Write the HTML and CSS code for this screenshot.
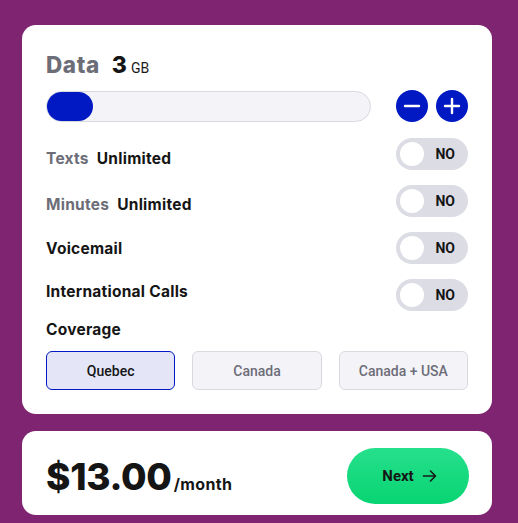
FILE: index.html
```html
<!DOCTYPE html>
<html>
<head>
<meta charset="utf-8">
<link rel="stylesheet" href="styles.css">
</head>
<body>
<div class="page">
  <section class="card plan">
    <div class="data-head">
      <span class="data-title">Data</span>
      <span class="data-val">3</span>
      <span class="data-unit">GB</span>
    </div>
    <div class="slider-row">
      <div class="track"><div class="thumb"></div></div>
      <div class="steppers">
        <button class="step" aria-label="minus"><svg width="32" height="32" viewBox="0 0 32 32"><line x1="9" y1="16" x2="23" y2="16" stroke="#fff" stroke-width="2.4" stroke-linecap="round"/></svg></button>
        <button class="step" aria-label="plus"><svg width="32" height="32" viewBox="0 0 32 32"><line x1="9" y1="16" x2="23" y2="16" stroke="#fff" stroke-width="2.4" stroke-linecap="round"/><line x1="16" y1="9" x2="16" y2="23" stroke="#fff" stroke-width="2.4" stroke-linecap="round"/></svg></button>
      </div>
    </div>
    <div class="opt-row">
      <div class="label low"><span class="muted">Texts</span><span class="strong">Unlimited</span></div>
      <div class="toggle"><span class="knob"></span><span class="no">NO</span></div>
    </div>
    <div class="opt-row">
      <div class="label lowish"><span class="muted">Minutes</span><span class="strong">Unlimited</span></div>
      <div class="toggle"><span class="knob"></span><span class="no">NO</span></div>
    </div>
    <div class="opt-row">
      <div class="label"><span class="strong">Voicemail</span></div>
      <div class="toggle"><span class="knob"></span><span class="no">NO</span></div>
    </div>
    <div class="opt-row">
      <div class="label high"><span class="strong">International Calls</span></div>
      <div class="toggle"><span class="knob"></span><span class="no">NO</span></div>
    </div>
    <div class="coverage-title">Coverage</div>
    <div class="coverage">
      <button class="cov active">Quebec</button>
      <button class="cov">Canada</button>
      <button class="cov">Canada + USA</button>
    </div>
  </section>
  <section class="card total">
    <div class="price"><span class="amount">$13.00</span><span class="per">/month</span></div>
    <button class="next">Next <svg width="16" height="16" viewBox="0 0 16 16"><path d="M1.5 8h12M8.5 3 13.5 8l-5 5" fill="none" stroke="#1a1a1a" stroke-width="1.6" stroke-linecap="round" stroke-linejoin="round"/></svg></button>
  </section>
</div>
</body>
</html>
```
FILE: styles.css
```css
* { box-sizing: border-box; }
html, body { margin: 0; padding: 0; }
body {
  background: #7e2470;
  font-family: "Inter", "Lato", sans-serif;
  color: #1a1a1a;
  width: 518px;
  height: 523px;
  overflow: hidden;
}
.page {
  padding: 25px 26px 0 22px;
  display: flex;
  flex-direction: column;
  gap: 17px;
}
.card {
  background: #fff;
  border-radius: 14px;
}
.plan {
  padding: 25px 24px 24px 24px;
  display: flex;
  flex-direction: column;
}
.data-head {
  display: flex;
  align-items: baseline;
  height: 30px;
  line-height: 30px;
  overflow: hidden;
}
.data-title {
  font-size: 22.5px;
  font-weight: 800;
  color: #6d6d78;
  margin-right: 12px;
  letter-spacing: 0.6px;
}
.data-val {
  font-size: 23px;
  font-weight: 800;
  color: #151515;
  margin-right: 4px;
}
.data-unit {
  font-family: "Roboto", sans-serif;
  font-size: 14px;
  color: #1a1a1a;
}
.slider-row {
  margin-top: 10px;
  display: flex;
  align-items: center;
  height: 32px;
}
.track {
  width: 325px;
  height: 31px;
  border: 1px solid #d9d9e0;
  background: #f4f4f8;
  border-radius: 16px;
  display: flex;
  align-items: center;
}
.thumb {
  width: 46px;
  height: 29px;
  border-radius: 15px;
  background: #0019c2;
}
.steppers {
  margin-left: auto;
  display: flex;
  gap: 8px;
}
.step {
  width: 32px;
  height: 32px;
  padding: 0;
  border: none;
  border-radius: 50%;
  background: #0019c2;
  display: flex;
}
.opt-row {
  display: flex;
  align-items: center;
  justify-content: space-between;
  height: 32px;
  margin-top: 15px;
}
.slider-row + .opt-row { margin-top: 16px; }
.label {
  display: flex;
  gap: 8px;
  font-size: 15.5px;
  font-weight: 700;
  letter-spacing: 0.25px;
}
.label.low { padding-top: 8px; }
.label.lowish { padding-top: 6px; }
.label.high { padding-bottom: 8px; }
.muted { color: #6d6d78; }
.strong { color: #151515; }
.toggle {
  width: 72px;
  height: 32px;
  border-radius: 16px;
  background: #dcdce5;
  display: flex;
  align-items: center;
  padding: 0 13px 0 4px;
}
.knob {
  width: 24px;
  height: 24px;
  border-radius: 50%;
  background: #fff;
}
.no {
  margin-left: auto;
  font-family: "Roboto", sans-serif;
  font-weight: 700;
  font-size: 14px;
  color: #151515;
}
.coverage-title {
  margin-top: 8px;
  font-size: 15.5px;
  font-weight: 700;
  letter-spacing: 0.25px;
  color: #151515;
  height: 22px;
  line-height: 22px;
}
.coverage {
  margin-top: 10px;
  display: grid;
  grid-template-columns: repeat(3, 1fr);
  gap: 17px;
}
.cov {
  height: 39px;
  border-radius: 6px;
  border: 1px solid #d9d9e0;
  background: #f4f4f8;
  font-family: "Roboto", sans-serif;
  font-size: 14px;
  font-weight: 500;
  color: #6d6d78;
  padding: 0;
}
.cov.active {
  background: #e4e6f8;
  border-color: #0019c2;
  color: #151515;
}
.total {
  padding: 17px 23px 11px 24px;
  display: flex;
  align-items: center;
  justify-content: space-between;
}
.price { display: flex; align-items: baseline; }
.amount {
  font-size: 37px;
  font-weight: 800;
  color: #151515;
  letter-spacing: -0.3px;
}
.per {
  font-size: 16px;
  font-weight: 700;
  color: #151515;
  margin-left: 2px;
  letter-spacing: 0.4px;
}
.next {
  width: 122px;
  height: 56px;
  border: none;
  border-radius: 28px;
  background: linear-gradient(#26e08c, #08d472);
  font-family: "Roboto", sans-serif;
  font-weight: 700;
  font-size: 15px;
  color: #151515;
  display: flex;
  align-items: center;
  justify-content: center;
  gap: 8px;
  padding: 0 0 0 4px;
}
```
